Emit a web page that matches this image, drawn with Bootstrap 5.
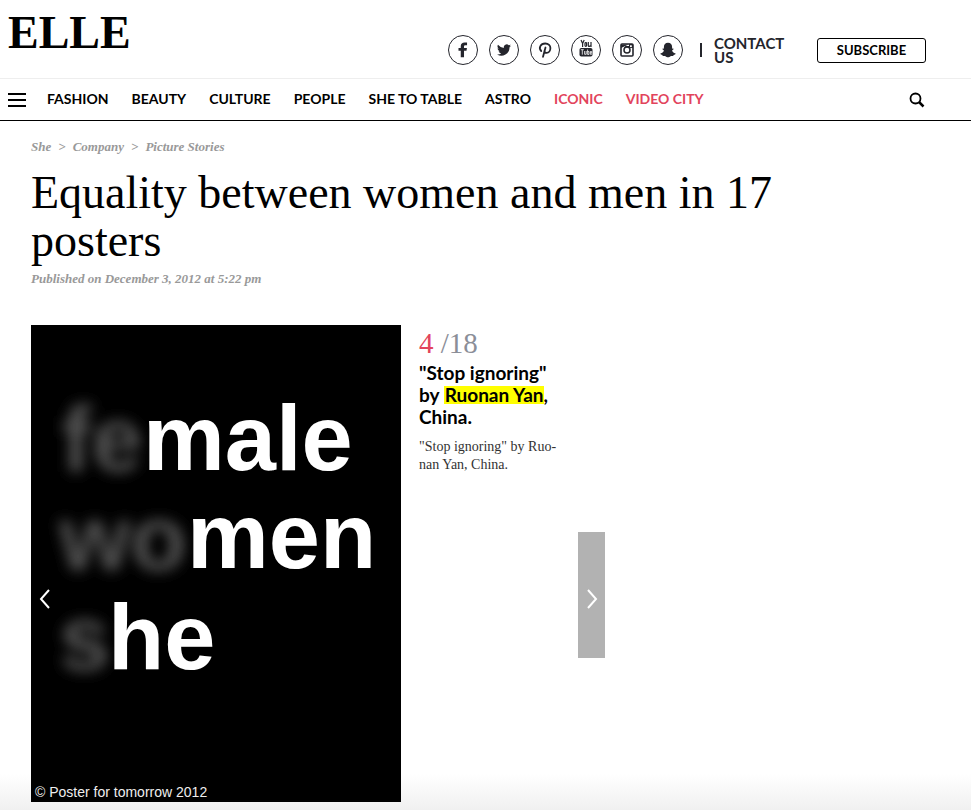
<!DOCTYPE html>
<html lang="en">
<head>
<meta charset="utf-8">
<meta name="viewport" content="width=device-width, initial-scale=1">
<title>Equality between women and men in 17 posters - ELLE</title>
<link href="https://cdn.jsdelivr.net/npm/bootstrap@5.3.0/dist/css/bootstrap.min.css" rel="stylesheet">
<style>
  :root { --accent: #e2445c; --ink: #24252c; }
  body {
    font-family: "Liberation Serif", serif; color: #000;
    background: linear-gradient(#fff, #f0f0f0) bottom / 100% 36px no-repeat #fff;
  }
  a { color: inherit; text-decoration: none; }
  .masthead { padding: 0 45px 0 8px; height: 79px; border-bottom: 1px solid #eee; }
  .brand { font: bold 46px/66px "Liberation Serif", serif; }
  .tools { padding-top: 22px; }
  .social { gap: 11px; }
  .social a { width: 30px; height: 30px; border: 1px solid var(--ink); color: var(--ink); }
  .sans { font-family: Lato, sans-serif; font-weight: 700; }
  .divider { width: 2px; height: 14px; background: var(--ink); margin: 0 12px 0 17px; }
  .contact { font-size: 15px; line-height: 14px; width: 80px; color: var(--ink); }
  .subscribe { font-size: 13px; line-height: 23px; width: 109px; border: 1px solid #000; border-radius: 3px; margin-left: 23px; padding: 0; background: #fff; color: #000; }
  .mainbar { padding: 0 46px 0 8px; height: 42px; border-bottom: 1px solid #000; font-size: 14px; }
  .links { gap: 23px; margin-left: 21px; padding-bottom: 2px; }
  .hot { color: var(--accent); }
  .article { padding: 17px 30px 8px 31px; }
  .meta { font-size: 13px; line-height: 18px; font-style: italic; font-weight: 700; color: #999; }
  .crumbs { --bs-breadcrumb-divider: '>'; --bs-breadcrumb-divider-color: #999; --bs-breadcrumb-item-padding-x: 7px; --bs-breadcrumb-margin-bottom: 0; --bs-breadcrumb-font-size: 13px; }
  .headline { font-size: 46px; line-height: 48px; max-width: 760px; margin: 13px 0 5px; font-weight: 400; }
  .gallery { margin-top: 37px; max-width: 574px; }
  .poster { flex: 0 1 370px; background: #000; }
  .caption { flex: 0 0 140px; margin-left: 18px; }
  .count { font-size: 29px; line-height: 36px; color: #8b8e98; }
  .slide-title { font-size: 19px; line-height: 22px; margin: 1px 0 10px; }
  .slide-title mark { display: inline-block; line-height: 18px; background: #ff0; padding: 0 0 0 1px; color: #000; }
  .note { font-size: 14px; line-height: 18px; color: #333; }
  .arrow { width: 27px; height: 126px; border: 0; padding: 6px 0 0; color: #fff; background: #b2b2b2; }
  .arrow-prev { background: none; margin-top: 31px; }
  .arrow-next { margin-top: 62px; }
</style>
<script src="https://cdn.jsdelivr.net/npm/bootstrap@5.3.0/dist/js/bootstrap.bundle.min.js"></script>
</head>
<body class="min-vh-100">
<header>
  <div class="masthead d-flex align-items-start">
    <a class="brand" href="#">ELLE</a>
    <div class="tools d-flex align-items-center ms-auto h-100">
      <div class="social d-flex">
        <a class="rounded-circle d-flex align-items-center justify-content-center" href="#" aria-label="Facebook"><svg width="18" height="18" viewBox="0 0 16 16" fill="currentColor"><path d="M6 14.500V8.700H4V6.300h2V4.500C6 2.400 7.400 1.300 9.400 1.300c1 0 1.900.1 2.200.1v2.300h-1.400C9.100 3.700 8.900 4.200 8.900 4.900v1.400h2.600l-.4 2.400H8.900v5.800z"/></svg></a>
        <a class="rounded-circle d-flex align-items-center justify-content-center" href="#" aria-label="Twitter"><svg width="14" height="14" viewBox="0 0 24 24" fill="currentColor"><path d="M24 4.600a10 10 0 0 1-2.800.8 5 5 0 0 0 2.100-2.700 10 10 0 0 1-3.100 1.200 4.900 4.900 0 0 0-8.400 4.500A14 14 0 0 1 1.700 3.100a4.900 4.900 0 0 0 1.500 6.600 5 5 0 0 1-2.200-.6c0 2.300 1.600 4.400 3.900 4.900a5 5 0 0 1-2.200.1 4.900 4.900 0 0 0 4.600 3.400A9.900 9.900 0 0 1 0 19.500 14 14 0 0 0 21.500 7.100 10 10 0 0 0 24 4.600z"/></svg></a>
        <a class="rounded-circle d-flex align-items-center justify-content-center" href="#" aria-label="Pinterest"><svg width="16" height="16" viewBox="0 0 16 16" fill="none" stroke="currentColor" stroke-width="1.800" stroke-linecap="round"><path d="M4.200 9C1.200 6 3.600 1.500 8.200 1.500c3.400 0 5.200 2.100 5.200 4.400 0 2.900-1.600 5-3.800 5-1.200 0-2-.7-2.200-1.700M8.500 5.500 6 14.800"/></svg></a>
        <a class="rounded-circle d-flex align-items-center justify-content-center pb-1" href="#" aria-label="YouTube"><svg width="16" height="18" viewBox="0 0 16 18" fill="currentColor"><g fill="none" stroke="currentColor" stroke-width="1.200"><path d="m3 1 1.600 3.500V8M6.200 1 4.600 4.500M13 3v5"/><rect x="7" y="3.600" width="1.600" height="3.800" rx=".8"/><path d="M10.300 3v3.800c0 1 1.500.7 2.400-.3"/></g><rect x="1.500" y="9" width="13" height="8.500" rx="1.800"/><g fill="none" stroke="#fff" stroke-width=".8"><path d="M2.800 10.700h3M4.300 10.700v5M6.600 12v3.300h1.600V12M9.600 10.500v5h1.300v-3H9.600M13.600 14.500v.8h-1.300v-2.800h1.300v1.300h-1.300"/></g></svg></a>
        <a class="rounded-circle d-flex align-items-center justify-content-center" href="#" aria-label="Instagram"><svg width="14" height="14" viewBox="0 0 14 14"><rect x="1" y="1" width="12" height="12" rx="1" fill="none" stroke="currentColor" stroke-width="1.600"/><path d="M1 5h3l1.500-2H9V1h4v4h-3M8.500 1.500H1V5" fill="currentColor"/><circle cx="7" cy="7" r="3" fill="#fff" stroke="currentColor" stroke-width="1.500"/><rect x="10" y="2.300" width="1.800" height="1.800" fill="#fff"/></svg></a>
        <a class="rounded-circle d-flex align-items-center justify-content-center" href="#" aria-label="Snapchat"><svg width="16" height="16" viewBox="0 0 16 16" fill="currentColor"><path d="M8 .8c2.700 0 4.100 1.900 4.100 4.200v1.600c.5.200 1.200-.3 1.400.3.200.7-1.400.9-1.400 1.600 0 1 1.500 2.700 3.500 3.100.3.900-1.100 1.200-2 1.300-.3.400 0 1-.6 1.100-.7.100-1.600-.2-2.500.2C9.700 14.700 9 15.300 8 15.300s-1.700-.6-2.500-1.100c-.9-.4-1.800-.1-2.500-.2-.6-.1-.3-.7-.6-1.100-.9-.1-2.300-.4-2-1.300 2-.4 3.500-2.100 3.500-3.100 0-.7-1.600-.9-1.400-1.600.2-.6.9-.1 1.400-.3V5C3.900 2.700 5.300.8 8 .8z"/></svg></a>
      </div>
      <span class="divider"></span>
      <a class="contact sans" href="#">CONTACT US</a>
      <button class="subscribe sans" type="button">SUBSCRIBE</button>
    </div>
  </div>
  <nav class="mainbar sans d-flex align-items-center" aria-label="Sections">
    <button class="btn p-0 border-0 d-flex" type="button" aria-label="Menu"><svg width="18" height="14" viewBox="0 0 18 14"><path d="M0 1h18M0 7h18M0 13h18" stroke="#000" stroke-width="2"/></svg></button>
    <div class="links d-flex text-nowrap">
      <a href="#">FASHION</a><a href="#">BEAUTY</a><a href="#">CULTURE</a><a href="#">PEOPLE</a><a href="#">SHE TO TABLE</a><a href="#">ASTRO</a><a class="hot" href="#">ICONIC</a><a class="hot" href="#">VIDEO CITY</a>
    </div>
    <button class="btn p-0 border-0 d-flex ms-auto" type="button" aria-label="Search"><svg width="16" height="16" viewBox="0 0 16 16" fill="none" stroke="#000" stroke-width="1.800"><circle cx="6.500" cy="6.500" r="5"/><path d="m10 10 4.500 4.500" stroke-width="2.500"/></svg></button>
  </nav>
</header>
<main class="article">
  <nav class="meta" aria-label="Breadcrumb">
    <ol class="breadcrumb crumbs">
      <li class="breadcrumb-item"><a href="#">She</a></li>
      <li class="breadcrumb-item"><a href="#">Company</a></li>
      <li class="breadcrumb-item"><a href="#">Picture Stories</a></li>
    </ol>
  </nav>
  <h1 class="headline">Equality between women and men in 17 posters</h1>
  <p class="meta mb-0">Published on December 3, 2012 at 5:22 pm</p>
  <section class="gallery d-flex align-items-start">
    <figure class="poster position-relative m-0">
      <svg class="d-block w-100" viewBox="0 0 370 477" font-family="Liberation Sans, sans-serif">
        <defs><filter id="haze" x="-30%" y="-30%" width="160%" height="160%"><feGaussianBlur stdDeviation="7"/></filter></defs>
        <rect width="370" height="477"/>
        <g font-size="92" font-weight="700" fill="#555" filter="url(#haze)">
          <text x="30" y="146">fe</text><text x="28" y="245">wo</text><text x="28" y="345">s</text>
        </g>
        <g font-size="92" font-weight="700" fill="#fff">
          <text x="112" y="145">male</text><text x="156" y="243">men</text><text x="77" y="344">he</text>
        </g>
        <text x="4" y="472" font-size="14" fill="#eee">© Poster for tomorrow 2012</text>
      </svg>
      <button class="arrow arrow-prev position-absolute top-50 start-0 translate-middle-y" type="button" aria-label="Previous"><svg width="12" height="20" viewBox="0 0 12 20" fill="none" stroke="currentColor" stroke-width="2"><path d="m10 1-8 9 8 9"/></svg></button>
    </figure>
    <div class="caption">
      <div class="count"><span class="hot">4</span> /18</div>
      <h2 class="slide-title sans">"Stop ignoring" by <mark>Ruonan Yan</mark>, China.</h2>
      <p class="note mb-0">"Stop ignoring" by Ruo&shy;nan Yan, China.</p>
    </div>
    <button class="arrow arrow-next ms-auto align-self-center" type="button" aria-label="Next"><svg width="12" height="20" viewBox="0 0 12 20" fill="none" stroke="currentColor" stroke-width="2"><path d="m2 1 8 9-8 9"/></svg></button>
  </section>
</main>
</body>
</html>
